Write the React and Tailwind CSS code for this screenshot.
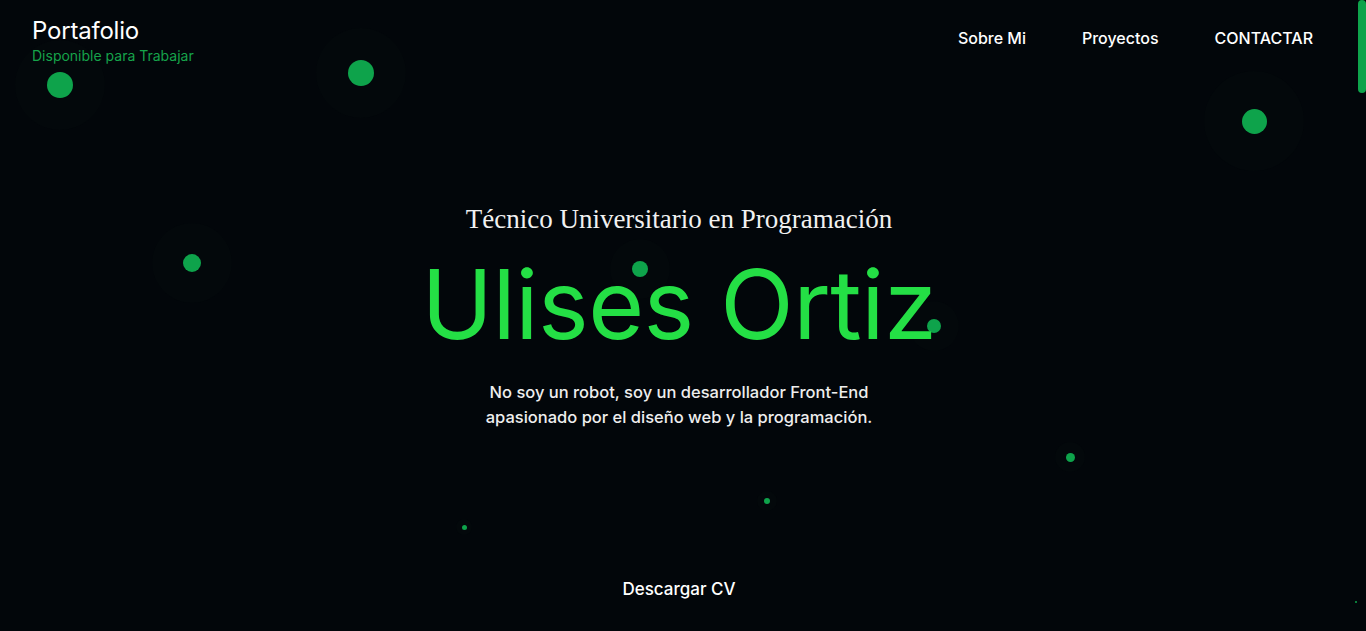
import React from 'react';

const particulas = [
  { x: 60, y: 85, d: 26, halo: 90 },
  { x: 361, y: 73, d: 26, halo: 90 },
  { x: 1254, y: 121, d: 25, halo: 100 },
  { x: 192, y: 263, d: 18, halo: 80 },
  { x: 640, y: 269, d: 16, halo: 60 },
  { x: 934, y: 326, d: 14, halo: 50 },
  { x: 1070, y: 457, d: 9, halo: 30 },
  { x: 767, y: 501, d: 6, halo: 20 },
  { x: 464, y: 527, d: 5, halo: 16 },
  { x: 1356, y: 602, d: 2, halo: 0 },
];

const links = ['Sobre Mi', 'Proyectos', 'CONTACTAR'];

function Particula({ x, y, d, halo }) {
  return (
    <>
      {halo > 0 && (
        <div
          className="absolute rounded-full bg-[#03080b] pointer-events-none"
          style={{ left: x - halo / 2, top: y - halo / 2, width: halo, height: halo }}
        />
      )}
      <div
        className="absolute rounded-full bg-[#0ea34b] pointer-events-none"
        style={{ left: x - d / 2, top: y - d / 2, width: d, height: d }}
      />
    </>
  );
}

export default function App() {
  return (
    <div className="relative h-[631px] w-full overflow-hidden bg-[#02060a] font-['Inter',sans-serif] text-white">
      {/* particulas flotantes */}
      {particulas.map((p, i) => (
        <Particula key={i} {...p} />
      ))}

      {/* barra de scroll */}
      <div className="absolute right-0 top-0 h-[93px] w-2 rounded-full bg-[#0ea34b]" />

      <div className="relative flex h-full flex-col pr-2">
        <header className="flex items-start justify-between pl-8 pr-[45px] pt-[17px]">
          <div>
            <h1 className="text-[24px] leading-7 font-normal tracking-[-0.2px]">Portafolio</h1>
            <span className="block text-[14px] leading-4 mt-[3px] text-[#16a34a]">
              Disponible para Trabajar
            </span>
          </div>
          <nav className="flex gap-14 pt-[11px]">
            {links.map((l) => (
              <a key={l} href="#" className="text-[16px] leading-5 font-medium">
                {l}
              </a>
            ))}
          </nav>
        </header>

        <section className="flex flex-col items-center text-center">
          <h2 className="mt-[139px] font-['Liberation_Serif',serif] text-[27px] leading-8 text-[#f1f1f1]">
            Técnico Universitario en Programación
          </h2>
          <h3 className="mt-[19px] text-[96px] leading-[100px] font-normal tracking-[-0.5px] text-[#24df45]">
            Ulises Ortiz
          </h3>
          <p className="mt-[26px] text-[16.5px] leading-[25px] font-medium text-[#eeeeee]">
            No soy un robot, soy un desarrollador Front-End
            <br />
            apasionado por el diseño web y la programación.
          </p>
          <a href="#" className="mt-[149px] text-[17px] leading-5 font-medium">
            Descargar CV
          </a>
        </section>
      </div>
    </div>
  );
}
